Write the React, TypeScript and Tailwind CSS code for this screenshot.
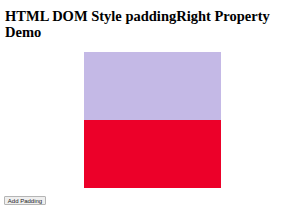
import React from 'react';

export default function App() {
  return (
    <div className="w-[300px] h-[210px] bg-white px-[5px] pt-[8px] font-['Liberation_Serif',serif] text-black overflow-hidden">
      <h1 className="text-[14.5px] leading-[16px] font-bold">
        HTML DOM Style paddingRight Property Demo
      </h1>

      <div className="ml-[79px] mt-[12px] w-[137px] flex flex-col">
        <div className="h-[68px] bg-[#c4b9e6]" />
        <div className="h-[68px] bg-[#ec0029]" />
      </div>

      <button className="mt-[8px] -ml-[1px] h-[9px] w-[42px] flex items-center justify-center bg-[#efefef] border border-[#b5b5b5] rounded-[1px] text-[6px] leading-none text-[#222] font-['Liberation_Sans',sans-serif]">
        Add Padding
      </button>
    </div>
  );
}
